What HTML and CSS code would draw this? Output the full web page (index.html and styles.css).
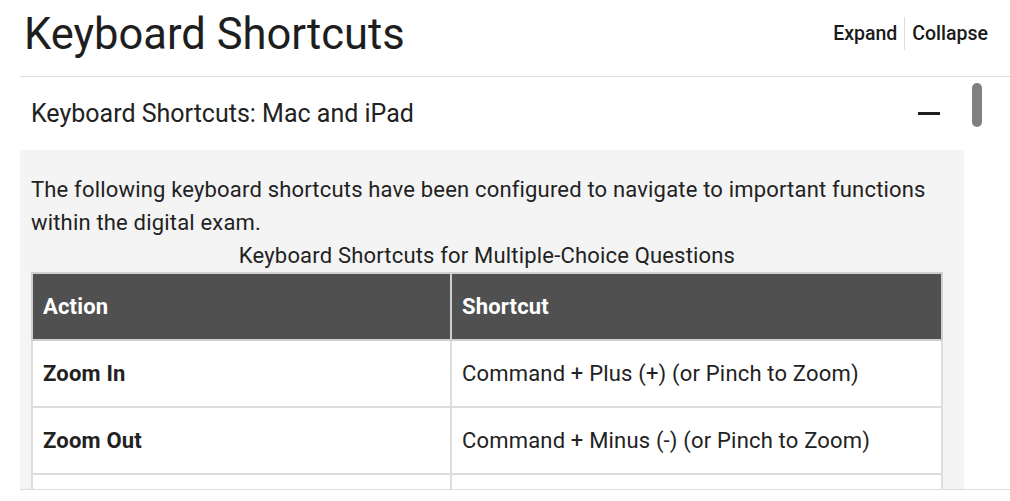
FILE: index.html
```html
<!DOCTYPE html>
<html lang="en">
<head>
<meta charset="utf-8">
<title>Keyboard Shortcuts</title>
<link rel="stylesheet" href="styles.css">
</head>
<body>
<div class="page">
  <div class="topbar">
    <h1 class="title">Keyboard Shortcuts</h1>
    <div class="toggles">
      <a class="toggle" href="#">Expand</a>
      <a class="toggle toggle-sep" href="#">Collapse</a>
    </div>
  </div>
  <div class="accordion">
    <div class="acc-main">
      <div class="acc-header">
        <span class="acc-title">Keyboard Shortcuts: Mac and iPad</span>
        <span class="minus"></span>
      </div>
      <div class="acc-body">
        <p class="intro">The following keyboard shortcuts have been configured to navigate to important functions within the digital exam.</p>
        <table class="shortcuts">
          <caption>Keyboard Shortcuts for Multiple-Choice Questions</caption>
          <thead>
            <tr><th class="col-action">Action</th><th>Shortcut</th></tr>
          </thead>
          <tbody>
            <tr><td class="action">Zoom In</td><td>Command + Plus (+) (or Pinch to Zoom)</td></tr>
            <tr><td class="action">Zoom Out</td><td>Command + Minus (-) (or Pinch to Zoom)</td></tr>
            <tr><td class="action">&nbsp;</td><td>&nbsp;</td></tr>
          </tbody>
        </table>
      </div>
    </div>
    <div class="rail"><div class="thumb"></div></div>
  </div>
</div>
</body>
</html>
```

FILE: styles.css
```css
html, body {
  margin: 0;
  padding: 0;
  background: #ffffff;
}
body {
  font-family: Roboto, "Liberation Sans", Arial, sans-serif;
  color: #222222;
  width: 1010px;
  height: 501px;
  overflow: hidden;
}
.page {
  padding-left: 20px;
}
.topbar {
  display: flex;
  justify-content: space-between;
  align-items: flex-start;
  height: 76px;
  padding-right: 22px;
}
.title {
  margin: 8px 0 0 4px;
  font-size: 43.5px;
  font-weight: 400;
  line-height: 53px;
  color: #1e1e1e;
}
.toggles {
  display: flex;
  margin-top: 17px;
}
.toggle {
  display: block;
  font-size: 19.5px;
  font-weight: 500;
  line-height: 33px;
  color: #1a1a1a;
  text-decoration: none;
  padding: 0 7px;
}
.toggle:last-child {
  padding-right: 0;
}
.toggle-sep {
  border-left: 1px solid #dddddd;
}
.accordion {
  display: flex;
  border-top: 1px solid #dddddd;
  border-bottom: 1px solid #dddddd;
}
.acc-main {
  width: 944px;
}
.acc-header {
  display: flex;
  align-items: center;
  justify-content: space-between;
  height: 73px;
  padding: 0 24px 0 11px;
}
.acc-title {
  font-size: 25px;
  color: #222222;
}
.minus {
  display: block;
  width: 22px;
  height: 3px;
  background: #1e1e1e;
}
.rail {
  flex: 1;
  padding: 6px 0 0 8px;
}
.thumb {
  width: 10px;
  height: 44px;
  border-radius: 5px;
  background: #808080;
}
.acc-body {
  background: #f4f4f4;
  height: 339px;
  overflow: hidden;
  padding: 23px 21px 0 11px;
  box-sizing: border-box;
}
.intro {
  margin: 0;
  font-size: 22px;
  letter-spacing: 0.18px;
  line-height: 33px;
  color: #222222;
}
.shortcuts {
  width: 912px;
  border-collapse: collapse;
  font-size: 22px;
  letter-spacing: 0.18px;
  background: #ffffff;
}
.shortcuts caption {
  font-size: 22px;
  line-height: 33px;
  color: #222222;
  text-align: center;
}
.shortcuts th,
.shortcuts td {
  border: 2px solid #dddddd;
  text-align: left;
  padding: 0 10px;
  height: 67px;
  box-sizing: border-box;
  vertical-align: middle;
}
.shortcuts th {
  background: #505050;
  color: #ffffff;
  font-weight: 700;
  border-color: #cfcfcf;
}
.col-action {
  width: 419px;
}
.shortcuts td {
  color: #222222;
}
.shortcuts td.action {
  font-weight: 700;
}
```
